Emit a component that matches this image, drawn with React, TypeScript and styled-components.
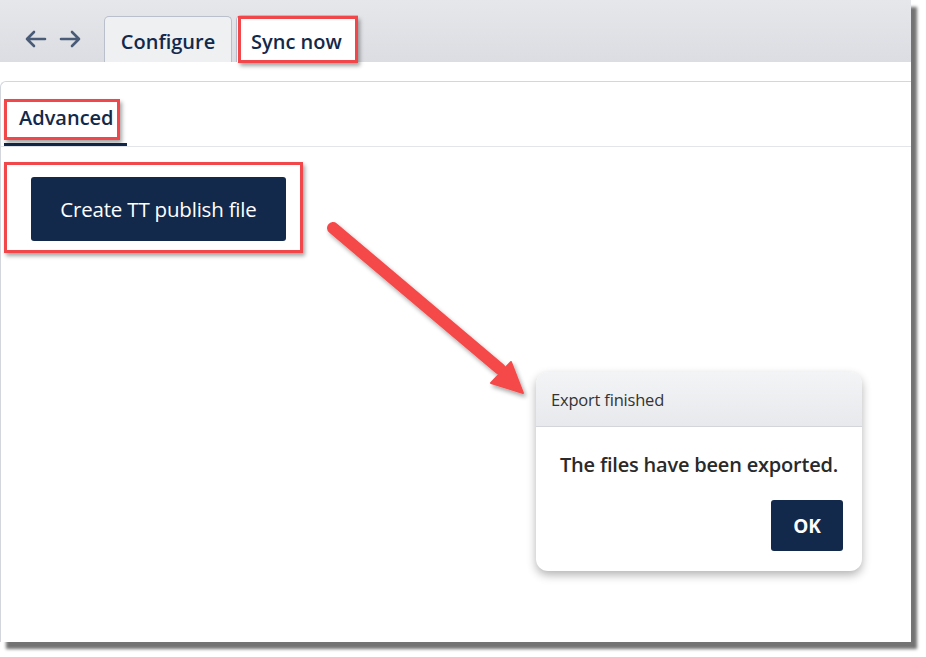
import React from "react";
import styled, { createGlobalStyle } from "styled-components";

const Global = createGlobalStyle`
  html, body { margin: 0; padding: 0; background: #ffffff; }
  body { font-family: "Open Sans", "Noto Sans", sans-serif; }
  * { box-sizing: border-box; }
`;

const navy = "#13294b";
const red = "#f2474a";

const Page = styled.div`
  width: 926px;
  height: 657px;
  background: #fff;
  position: relative;
`;

const Window = styled.div`
  position: relative;
  width: 911px;
  height: 642px;
  background: #fff;
  box-shadow: 6px 7px 3px rgba(0, 0, 0, 0.55);
  display: flex;
  flex-direction: column;
`;

const TopBar = styled.div`
  height: 62px;
  flex: none;
  background: linear-gradient(#e6e7eb, #dcdde2);
  display: flex;
  align-items: flex-end;
  padding-left: 24px;
`;

const NavGroup = styled.div`
  display: flex;
  gap: 12px;
  align-self: center;
  margin-top: 16px;
  margin-right: 22px;
`;

const NavArrow = styled.svg`
  width: 23px;
  height: 18px;
  display: block;
`;

const TabRow = styled.div`
  display: flex;
  gap: 4px;
  align-items: flex-end;
`;

const Tab = styled.div`
  width: 128px;
  height: 46px;
  display: flex;
  align-items: center;
  justify-content: center;
  padding-top: 3px;
  font-size: 20px;
  font-weight: 600;
  color: ${navy};
  border: 1px solid #b9bfcb;
  border-bottom: none;
  border-radius: 5px 5px 0 0;
  background: #eef0f2;
  letter-spacing: 0;
`;

const SyncTab = styled.div`
  height: 47px;
  border-left: 1px solid #b9bfcb;
  border-top: 1px solid #b9bfcb;
  border-radius: 5px 0 0 0;
  padding-left: 1px;
  display: flex;
  align-items: flex-start;
  background: #fff;
`;

const SyncLabel = styled.div`
  height: 47px;
  width: 120px;
  border: 3px solid ${red};
  box-shadow: 2px 3px 4px rgba(0, 0, 0, 0.35);
  display: flex;
  align-items: center;
  padding-left: 10px;
  padding-top: 3px;
  font-size: 20px;
  font-weight: 600;
  color: ${navy};
  background: #fff;
`;

const Panel = styled.div`
  margin-top: 19px;
  flex: 1;
  border-top: 1px solid #d3d6dd;
  border-left: 1px solid #d3d6dd;
  border-radius: 6px 0 0 0;
  display: flex;
  flex-direction: column;
`;

const SubTabs = styled.div`
  height: 65px;
  border-bottom: 1px solid #e3e5ea;
  display: flex;
  align-items: flex-end;
  padding-left: 3px;
`;

const SubTab = styled.div`
  width: 123px;
  height: 47px;
  border-bottom: 3px solid ${navy};
  display: flex;
  align-items: flex-start;
`;

const SubTabLabel = styled.div`
  width: 116px;
  height: 41px;
  border: 3px solid ${red};
  box-shadow: 2px 3px 4px rgba(0, 0, 0, 0.35);
  display: flex;
  align-items: center;
  padding-left: 12px;
  padding-bottom: 5px;
  font-size: 20px;
  font-weight: 600;
  color: ${navy};
`;

const Body = styled.div`
  padding: 15px 0 0 3px;
`;

const PrimaryButton = styled.button<{ $w: number; $h: number; $bold?: boolean }>`
  width: ${(p) => p.$w}px;
  height: ${(p) => p.$h}px;
  background: ${navy};
  color: #fff;
  border: none;
  border-radius: 3px;
  font-family: "Open Sans", "Noto Sans", sans-serif;
  font-size: ${(p) => (p.$bold ? 19 : 20.5)}px;
  font-weight: ${(p) => (p.$bold ? 700 : 400)};
  letter-spacing: -0.2px;
  padding: 0;
  display: flex;
  align-items: center;
  justify-content: center;
`;

const ButtonHighlight = styled.div`
  display: inline-flex;
  width: 299px;
  height: 91px;
  border: 3px solid ${red};
  box-shadow: 2px 3px 4px rgba(0, 0, 0, 0.35);
  padding: 12px 0 0 24px;
`;

const ArrowLayer = styled.svg`
  position: absolute;
  left: 0;
  top: 0;
  width: 911px;
  height: 642px;
  pointer-events: none;
  overflow: visible;
`;

const Dialog = styled.div`
  position: absolute;
  left: 536px;
  top: 372px;
  width: 326px;
  height: 199px;
  border-radius: 12px;
  background: #fff;
  box-shadow: 0 4px 10px rgba(0, 0, 0, 0.3);
  display: flex;
  flex-direction: column;
  overflow: hidden;
`;

const DialogHeader = styled.div`
  height: 55px;
  flex: none;
  background: linear-gradient(#f3f4f6, #e8e9ec);
  border-bottom: 1px solid #d3d5da;
  display: flex;
  align-items: center;
  padding-left: 15px;
  padding-top: 1px;
  font-size: 16.5px;
  color: #333;
  letter-spacing: -0.2px;
`;

const DialogMessage = styled.div`
  text-align: center;
  padding-top: 24px;
  font-size: 20px;
  font-weight: 600;
  color: #2a2a2a;
  letter-spacing: -0.2px;
  line-height: 28px;
`;

const DialogFooter = styled.div`
  display: flex;
  justify-content: flex-end;
  padding: 21px 19px 0 0;
`;

const ArrowLeft = () => (
  <NavArrow viewBox="0 0 23 18">
    <path d="M21 9H3M10 2L3 9l7 7" fill="none" stroke="#4a5b78" strokeWidth="2.6" strokeLinecap="round" strokeLinejoin="round" />
  </NavArrow>
);
const ArrowRight = () => (
  <NavArrow viewBox="0 0 23 18">
    <path d="M2 9h18M13 2l7 7-7 7" fill="none" stroke="#4a5b78" strokeWidth="2.6" strokeLinecap="round" strokeLinejoin="round" />
  </NavArrow>
);

export default function App() {
  return (
    <Page>
      <Global />
      <Window>
        <TopBar>
          <NavGroup>
            <ArrowLeft />
            <ArrowRight />
          </NavGroup>
          <TabRow>
            <Tab>Configure</Tab>
            <SyncTab>
              <SyncLabel>Sync now</SyncLabel>
            </SyncTab>
          </TabRow>
        </TopBar>
        <Panel>
          <SubTabs>
            <SubTab>
              <SubTabLabel>Advanced</SubTabLabel>
            </SubTab>
          </SubTabs>
          <Body>
            <ButtonHighlight>
              <PrimaryButton $w={255} $h={64}>Create TT publish file</PrimaryButton>
            </ButtonHighlight>
          </Body>
        </Panel>

        <ArrowLayer viewBox="0 0 911 642">
          <defs>
            <filter id="sh" x="-20%" y="-20%" width="140%" height="140%">
              <feDropShadow dx="2" dy="3" stdDeviation="2" floodColor="#000" floodOpacity="0.35" />
            </filter>
          </defs>
          <g filter="url(#sh)">
            <line x1="333" y1="228" x2="500" y2="369" stroke="#f54a4a" strokeWidth="12" strokeLinecap="round" />
            <polygon points="523,393 491,383 511,362" fill="#f54a4a" stroke="#f54a4a" strokeWidth="2" strokeLinejoin="round" />
          </g>
        </ArrowLayer>

        <Dialog>
          <DialogHeader>Export finished</DialogHeader>
          <DialogMessage>The files have been exported.</DialogMessage>
          <DialogFooter>
            <PrimaryButton $w={72} $h={51} $bold>OK</PrimaryButton>
          </DialogFooter>
        </Dialog>
      </Window>
    </Page>
  );
}
